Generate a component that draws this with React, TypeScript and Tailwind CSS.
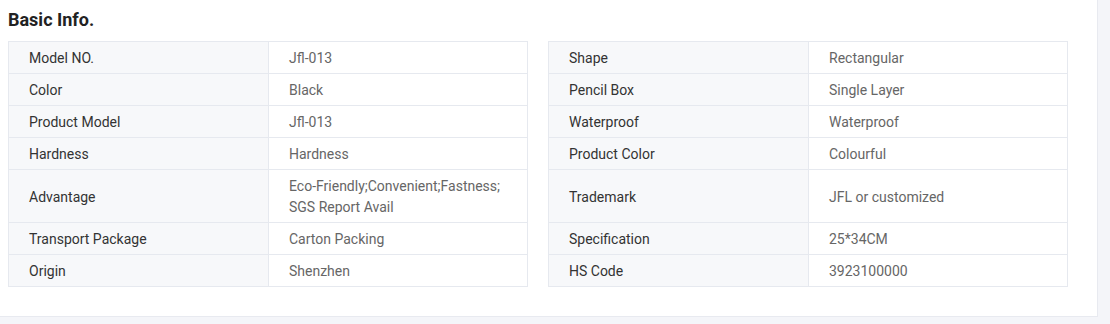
const left: [string, string][] = [
  ["Model NO.", "Jfl-013"],
  ["Color", "Black"],
  ["Product Model", "Jfl-013"],
  ["Hardness", "Hardness"],
  ["Advantage", "Eco-Friendly;Convenient;Fastness; SGS Report Avail"],
  ["Transport Package", "Carton Packing"],
  ["Origin", "Shenzhen"],
];

const right: [string, string][] = [
  ["Shape", "Rectangular"],
  ["Pencil Box", "Single Layer"],
  ["Waterproof", "Waterproof"],
  ["Product Color", "Colourful"],
  ["Trademark", "JFL or customized"],
  ["Specification", "25*34CM"],
  ["HS Code", "3923100000"],
];

function InfoTable({ rows }: { rows: [string, string][] }) {
  return (
    <table className="w-[520px] border-collapse table-fixed text-[14px]">
      <colgroup>
        <col className="w-[260px]" />
        <col />
      </colgroup>
      <tbody>
        {rows.map(([k, v], i) => (
          <tr key={k} className={i === 4 ? "h-[53px]" : "h-[32px]"}>
            <td className="border border-[#e6e9ef] bg-[#f7f8fa] pl-[20px] pr-3 pt-[6px] pb-[4px] leading-[21px] text-[#333]">
              {k}
            </td>
            <td className="border border-[#e6e9ef] bg-white pl-[20px] pr-3 pt-[6px] pb-[4px] leading-[21px] text-[#666]">
              {k === "Advantage" ? (
                <>
                  Eco-Friendly;Convenient;Fastness;
                  <br />
                  SGS Report Avail
                </>
              ) : (
                v
              )}
            </td>
          </tr>
        ))}
      </tbody>
    </table>
  );
}

export default function App() {
  return (
    <div className="w-[1110px] h-[324px] bg-[#f4f5f9] font-['Roboto',sans-serif]">
      <div className="w-[1098px] h-[317px] bg-white border-r border-b border-[#e8eaf0] pl-2 pt-[8px]">
        <h2 className="text-[18px] font-bold text-[#222] leading-[23px]">Basic Info.</h2>
        <div className="flex items-start gap-[20px] mt-[10px]">
          <InfoTable rows={left} />
          <InfoTable rows={right} />
        </div>
      </div>
    </div>
  );
}
